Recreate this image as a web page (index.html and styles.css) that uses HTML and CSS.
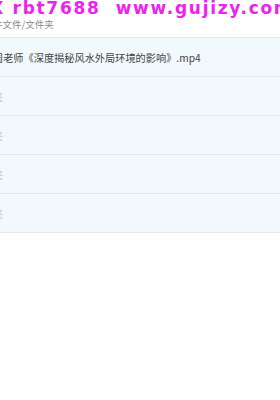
FILE: index.html
```html
<!DOCTYPE html>
<html lang="zh-CN">
<head>
    <meta charset="UTF-8">
    <meta name="viewport" content="width=device-width, initial-scale=1.0">
    <title>文件/文件夹</title>
    <link rel="stylesheet" href="styles.css">
</head>
<body>
    <div class="watermark">QX rbt7688  www.gujizy.com</div>

    <div class="path"><span class="cut">件</span>文件/文件夹</div>

    <div class="list">
        <div class="row"><span class="name">周老师《深度揭秘风水外局环境的影响》.mp4</span></div>
        <div class="row"><span class="name faint">夹</span></div>
        <div class="row"><span class="name faint">夹</span></div>
        <div class="row"><span class="name faint">夹</span></div>
        <div class="row"><span class="name faint">夹</span></div>
    </div>
</body>
</html>
```

FILE: styles.css
```css
body {
    margin: 0;
    padding: 0;
    width: 280px;
    height: 400px;
    overflow: hidden;
    background-color: #fff;
    font-family: "Noto Sans CJK SC", "Liberation Sans", sans-serif;
    color: #333;
    position: relative;
}
.watermark {
    position: absolute;
    top: -2px;
    left: -26px;
    white-space: pre;
    font-family: "DejaVu Sans", sans-serif;
    font-weight: bold;
    font-size: 17px;
    letter-spacing: 1.7px;
    color: #ee22ee;
    z-index: 2;
}
.path {
    height: 37px;
    box-sizing: border-box;
    padding-top: 18px;
    margin-left: -7px;
    font-size: 9.5px;
    line-height: 12px;
    color: #8a8a8a;
    white-space: nowrap;
}
.list {
    border-bottom: 1px solid #e2eaef;
}
.row {
    height: 38px;
    border-top: 1px solid #e2eaef;
    background-color: #f2f9fd;
    display: flex;
    align-items: center;
    overflow: hidden;
}
.name {
    margin-left: -7px;
    font-size: 10.2px;
    white-space: nowrap;
    color: #444;
}
.faint {
    color: #c0c6cb;
}
```
